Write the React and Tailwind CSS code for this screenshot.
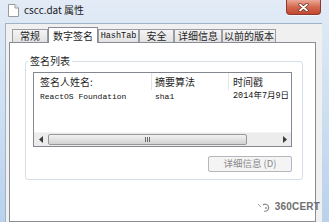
import React from 'react';

const tabs = [
  { label: '常规', w: 'w-[36px]' },
  { label: '数字签名', w: 'w-[50px]', active: true },
  { label: 'HashTab', w: 'w-[41px]', mono: true },
  { label: '安全', w: 'w-[35px]' },
  { label: '详细信息', w: 'w-[48px]' },
  { label: '以前的版本', w: 'w-[54px]' },
];

const DocIcon = () => (
  <svg width="11" height="13" viewBox="0 0 11 13" className="ml-[8px] mt-[4px] shrink-0">
    <path d="M0.5 0.5 H7 L10.5 4 V12.5 H0.5 Z" fill="#ffffff" stroke="#9a9a9a" />
    <path d="M7 0.5 V4 H10.5" fill="#eeeeee" stroke="#9a9a9a" />
  </svg>
);

const CloseButton = () => (
  <div className="ml-auto mr-[8px] w-[35px] h-[15px] rounded-b-[4px] border border-t-0 border-[#8a3a2e] bg-gradient-to-b from-[#eaa897] via-[#d3694f] to-[#c4472e] flex items-center justify-center shadow-[0_1px_0_rgba(255,255,255,0.6)]">
    <svg width="11" height="9" viewBox="0 0 11 9">
      <path d="M2 1.5 L9 7.5 M9 1.5 L2 7.5" stroke="#6b2a20" strokeWidth="3.2" strokeLinecap="round" />
      <path d="M2 1.5 L9 7.5 M9 1.5 L2 7.5" stroke="#ffffff" strokeWidth="1.8" strokeLinecap="round" />
    </svg>
  </div>
);

const ScrollBar = () => (
  <div className="h-[14px] flex bg-[#ececec] border-t border-[#f4f4f4]">
    <div className="w-[14px] flex items-center justify-center">
      <svg width="4" height="7" viewBox="0 0 4 7"><path d="M4 0 L0 3.5 L4 7 Z" fill="#3c3c3c" /></svg>
    </div>
    <div className="w-[199px] my-px rounded-[2px] border border-[#979797] bg-gradient-to-b from-[#f2f2f2] to-[#d2d2d2] flex items-center justify-center">
      <span className="flex gap-px">
        <span className="w-px h-[5px] bg-[#6b6b6b]" />
        <span className="w-px h-[5px] bg-[#6b6b6b]" />
        <span className="w-px h-[5px] bg-[#6b6b6b]" />
      </span>
    </div>
    <div className="flex-1" />
    <div className="w-[12px] flex items-center justify-center">
      <svg width="4" height="7" viewBox="0 0 4 7"><path d="M0 0 L4 3.5 L0 7 Z" fill="#3c3c3c" /></svg>
    </div>
  </div>
);

export default function App() {
  return (
    <div className="w-[329px] h-[222px] overflow-hidden relative flex flex-col bg-gradient-to-b from-[#e2ebf6] via-[#cddff2] to-[#b9d1ec] font-['Noto_Sans_CJK_SC',sans-serif] text-[#1e1e1e]">
      {/* title bar */}
      <div className="h-[23px] flex items-start shrink-0">
        <DocIcon />
        <span className="ml-[5px] mt-[3px] text-[10px] leading-[14px] text-[#1a1a1a]">cscc.dat 属性</span>
        <CloseButton />
      </div>

      {/* client area */}
      <div className="flex-1 ml-[5px] mr-[7px] bg-[#f0f0f0] border-l border-t border-[#9fb2c8] pl-[3px] pr-[6px] pt-[4px] flex flex-col">
        {/* tabs */}
        <div className="flex items-end h-[15px] pl-[3px] relative z-10 -mb-px">
          {tabs.map((t) =>
            t.active ? (
              <div
                key={t.label}
                className={`${t.w} h-[16px] bg-white border border-b-0 border-[#898c95] flex items-center justify-center text-[10px] leading-none`}
              >
                {t.label}
              </div>
            ) : (
              <div
                key={t.label}
                className={`${t.w} h-[13px] mb-px bg-gradient-to-b from-[#f4f4f4] to-[#e2e2e2] border border-b-0 border-[#9a9ca3] flex items-center justify-center leading-none ${
                  t.mono ? "font-['Liberation_Mono',monospace] text-[8.5px] text-[#111]" : 'text-[10px]'
                }`}
              >
                {t.label}
              </div>
            )
          )}
        </div>

        {/* tab panel */}
        <div className="flex-1 bg-white border border-[#898c95] pl-[15px] pr-[12px]">
          <fieldset className="mt-[12px] border border-[#d5dfe5] rounded-[3px] pl-[7px] pr-[10px] pb-[7px]">
            <legend className="-ml-[5px] px-[2px] text-[10px] leading-[12px]">签名列表</legend>

            {/* list view */}
            <div className="mt-[5px] h-[75px] border border-[#828790] flex flex-col bg-white">
              <div className="h-[17px] flex text-[10px] leading-none">
                <div className="w-[118px] pl-[6px] flex items-center border-r border-[#e5e5e5]">签名人姓名:</div>
                <div className="w-[77px] pl-[3px] flex items-center border-r border-[#e5e5e5]">摘要算法</div>
                <div className="flex-1 pl-[4px] flex items-center">时间戳</div>
              </div>
              <div className="h-[13px] flex items-center text-[8px] leading-none text-[#111] font-['Liberation_Mono','Noto_Sans_CJK_SC',monospace]">
                <div className="w-[118px] pl-[6px]">ReactOS Foundation</div>
                <div className="w-[77px] pl-[3px]">sha1</div>
                <div className="flex-1 pl-[4px] text-[8.5px] whitespace-nowrap">2014年7月9日</div>
              </div>
              <div className="flex-1" />
              <ScrollBar />
            </div>

            <div className="flex justify-end mt-[9px]">
              <button className="w-[84px] h-[16px] rounded-[2px] border border-[#b4b8bc] bg-[#f4f4f4] text-[#8a8a8a] text-[9.5px] leading-none flex items-center justify-center">
                详细信息 (D)
              </button>
            </div>
          </fieldset>
        </div>
      </div>

      {/* watermark */}
      <div className="absolute right-[9px] top-[201px] flex items-center gap-[4px] text-[#6f6f6f]">
        <svg width="14" height="12" viewBox="0 0 14 12">
          <path d="M1 3 L4 6" stroke="#9a9a9a" strokeWidth="1" />
          <path d="M6 4 A3.5 3.5 0 1 1 7 10" fill="none" stroke="#8a8a8a" strokeWidth="1.2" />
          <circle cx="9" cy="7" r="0.9" fill="#8a8a8a" />
        </svg>
        <span className="font-['Liberation_Sans',sans-serif] font-bold text-[10px] leading-none tracking-[0.2px]">360CERT</span>
      </div>
    </div>
  );
}
